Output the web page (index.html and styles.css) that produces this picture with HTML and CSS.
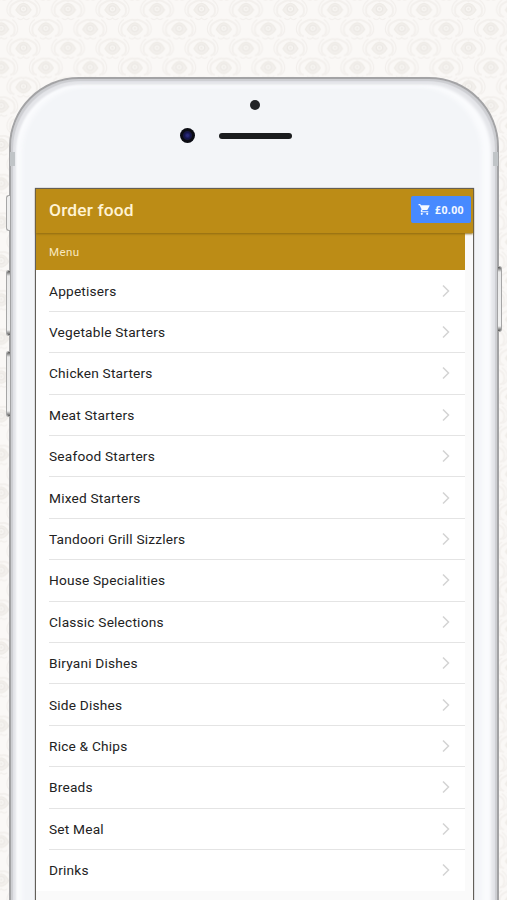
FILE: index.html
```html
<!DOCTYPE html>
<html lang="en">
<head>
<meta charset="utf-8">
<title>Order food</title>
<link rel="stylesheet" href="styles.css">
</head>
<body>
<svg class="wallpaper" width="507" height="900" aria-hidden="true">
  <defs>
    <g id="motif" fill="none" stroke="#f0ede9" stroke-width="1.2">
      <path d="M-7.500 1Q-4-5.500 0-5.500Q4-5.500 7.500 1Q4 6.500 0 6.500Q-4 6.500-7.500 1Z" fill="#f2efec" stroke="#eeebe6"/>
      <circle r="3.200" fill="#f8f6f3" stroke="#ece9e5"/>
      <circle r="1.200" fill="#eeebe7" stroke="none"/>
      <path d="M-9 8C-15 6-15-3-9-6C-6-8-3-10 0-8C3-10 6-8 9-6C15-3 15 6 9 8" stroke-width="2" stroke="#f3f0ed"/>
      <path d="M-12 8C-19 4-17-5-11-9M12 8C19 4 17-5 11-9M-6 9Q-3 12 0 9Q3 12 6 9" stroke="#f2efec"/>
    </g>
    <pattern id="damask" x="1.300" y="9" width="44.500" height="38.700" patternUnits="userSpaceOnUse">
      <use href="#motif" x="22.200" y="0"/>
      <use href="#motif" x="22.200" y="38.700"/>
      <use href="#motif" x="0" y="19.350"/>
      <use href="#motif" x="44.500" y="19.350"/>
    </pattern>
  </defs>
  <rect width="507" height="900" fill="#faf8f6"/>
  <rect width="507" height="900" fill="url(#damask)"/>
</svg>

<div class="phone">
  <i class="key key-mute"></i><i class="key key-up"></i><i class="key key-down"></i><i class="key key-power"></i>
  <i class="antenna antenna-left"></i><i class="antenna antenna-right"></i>
  <div class="bezel">
    <span class="sensor"></span>
    <div class="earpiece"><span class="camera"></span><span class="speaker"></span></div>
  </div>
  <main class="screen">
    <header class="toolbar">
      <h1>Order food</h1>
      <button class="cart">
        <svg width="13" height="13" viewBox="0 0 24 24" fill="currentColor"><path d="M7 18a2 2 0 1 0 0 4 2 2 0 0 0 0-4ZM17 18a2 2 0 1 0 0 4 2 2 0 0 0 0-4ZM1 2v2h2l3.600 7.600-1.400 2.400C4.500 15.400 5.500 17 7 17h12v-2H7.400l1.100-2h7.500c.8 0 1.400-.4 1.700-1L21.300 5.500C21.700 4.800 21.200 4 20.500 4H5.200l-.9-2H1Z"/></svg>
        <span>£0.00</span>
      </button>
    </header>
    <section class="content">
      <h2>Menu</h2>
      <ul class="menu">
        <li>Appetisers<svg class="chevron" viewBox="0 0 8 14"><path d="M1 1.500L6.500 7L1 12.500"/></svg></li>
        <li>Vegetable Starters<svg class="chevron" viewBox="0 0 8 14"><path d="M1 1.500L6.500 7L1 12.500"/></svg></li>
        <li>Chicken Starters<svg class="chevron" viewBox="0 0 8 14"><path d="M1 1.500L6.500 7L1 12.500"/></svg></li>
        <li>Meat Starters<svg class="chevron" viewBox="0 0 8 14"><path d="M1 1.500L6.500 7L1 12.500"/></svg></li>
        <li>Seafood Starters<svg class="chevron" viewBox="0 0 8 14"><path d="M1 1.500L6.500 7L1 12.500"/></svg></li>
        <li>Mixed Starters<svg class="chevron" viewBox="0 0 8 14"><path d="M1 1.500L6.500 7L1 12.500"/></svg></li>
        <li>Tandoori Grill Sizzlers<svg class="chevron" viewBox="0 0 8 14"><path d="M1 1.500L6.500 7L1 12.500"/></svg></li>
        <li>House Specialities<svg class="chevron" viewBox="0 0 8 14"><path d="M1 1.500L6.500 7L1 12.500"/></svg></li>
        <li>Classic Selections<svg class="chevron" viewBox="0 0 8 14"><path d="M1 1.500L6.500 7L1 12.500"/></svg></li>
        <li>Biryani Dishes<svg class="chevron" viewBox="0 0 8 14"><path d="M1 1.500L6.500 7L1 12.500"/></svg></li>
        <li>Side Dishes<svg class="chevron" viewBox="0 0 8 14"><path d="M1 1.500L6.500 7L1 12.500"/></svg></li>
        <li>Rice &amp; Chips<svg class="chevron" viewBox="0 0 8 14"><path d="M1 1.500L6.500 7L1 12.500"/></svg></li>
        <li>Breads<svg class="chevron" viewBox="0 0 8 14"><path d="M1 1.500L6.500 7L1 12.500"/></svg></li>
        <li>Set Meal<svg class="chevron" viewBox="0 0 8 14"><path d="M1 1.500L6.500 7L1 12.500"/></svg></li>
        <li>Drinks<svg class="chevron" viewBox="0 0 8 14"><path d="M1 1.500L6.500 7L1 12.500"/></svg></li>
      </ul>
    </section>
  </main>
</div>
</body>
</html>
```
FILE: styles.css
```css
* { box-sizing: border-box; }
html, body { margin: 0; height: 100%; overflow: hidden; }
body {
  font-family: Roboto, sans-serif;
  background: #faf8f6;
  color: #222;
  display: flow-root;
}
.wallpaper { position: absolute; inset: 0; z-index: -1; }

.phone {
  position: relative;
  display: flex;
  flex-direction: column;
  height: 823px;
  margin: 77px 8px 0 9px;
  padding: 0 23px 0 24px;
  border: 2px solid #a3a3a5;
  border-bottom: 0;
  border-radius: 70px 70px 0 0;
  background: #f3f5f8;
  box-shadow: inset 2px 2px 1px #cdced2, inset -2px 2px 1px #cdced2,
    inset 5px 5px 2px #e4e5e9, inset -6px 5px 3px #e4e5e9,
    inset 11px 7px 4px #fafbfd, inset -15px 7px 4px #fafbfd;
}
.key {
  position: absolute;
  left: -5px;
  width: 4px;
  border: 1px solid #a6a6a6;
  border-right: 0;
  border-radius: 3px 0 0 3px;
  background: linear-gradient(#555, #e9e9e9 5px, #f1f1f1 calc(100% - 5px), #555);
}
.key-mute { top: 116px; height: 36px; background: #eee; }
.key-up { top: 191px; height: 66px; }
.key-down { top: 272px; height: 66px; }
.key-power {
  top: 187px; left: auto; right: -5px; height: 66px;
  border: 1px solid #a6a6a6; border-left: 0; border-radius: 0 3px 3px 0;
}
.antenna { position: absolute; top: 73px; width: 5px; height: 14px; background: #c0c4c7; }
.antenna-left { left: -1px; }
.antenna-right { right: -1px; }

.bezel { flex: none; height: 109px; padding-top: 21px; }
.sensor { display: block; width: 10px; height: 10px; margin: 0 0 0 215px; border-radius: 50%; background: #222426; }
.earpiece { display: flex; align-items: center; margin: 18px 0 0 145px; gap: 24px; }
.camera { width: 15px; height: 15px; border-radius: 50%; background: radial-gradient(circle, #2a2a78 0 1px, #15154e 3px, #17173f 4px, #0b0c14 5px); }
.speaker { width: 73px; height: 6px; border-radius: 3px; background: #1a1c1e; }

.screen {
  flex: 1;
  min-height: 0;
  border: 1px solid #625f59;
  border-bottom: 0;
  background: #fafafa;
  box-shadow: 0 0 1px #777;
}
.toolbar {
  display: flex;
  align-items: center;
  justify-content: space-between;
  height: 44px;
  padding: 0 2px 0 13px;
  background: #bc8c16;
  box-shadow: 0 1px 2px #8f6b12;
  position: relative;
}
h1 { margin: -3px 0 0; font-size: 17.4px; font-weight: 500; color: #fff3d4; letter-spacing: .15px; }
.cart {
  display: flex;
  align-items: center;
  justify-content: center;
  gap: 4px;
  width: 60px;
  height: 27px;
  margin-top: -3px;
  padding: 0;
  border: 0;
  border-radius: 2px;
  background: #478aff;
  color: #f4f8ff;
  font: 700 10.5px "Open Sans", sans-serif;
  letter-spacing: .4px;
}
.content { width: 429px; background: #fff; }
h2 {
  height: 37.4px;
  margin: 0;
  padding: 2px 0 0 13px;
  background: #bc8c16;
  color: #f9e8c0;
  font-size: 11.5px;
  font-weight: 400;
  line-height: 35px;
  letter-spacing: .4px;
}
.menu { margin: 0; padding: 0 0 0 13px; list-style: none; }
.menu li {
  display: flex;
  align-items: center;
  justify-content: space-between;
  height: 41.42px;
  padding: 0 15px 0 0;
  border-bottom: 1px solid #e4e4e4;
  font-size: 13.7px;
  letter-spacing: .2px;
}
.menu li:last-child { border-color: transparent; }
.chevron { width: 8px; height: 14px; fill: none; stroke: #d4d4d4; stroke-width: 1.500; }
```
